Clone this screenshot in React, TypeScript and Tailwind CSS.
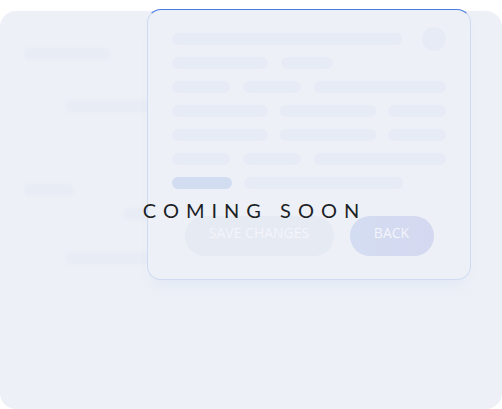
import React from "react";

const Bar = ({ w, blue = false }: { w: string; blue?: boolean }) => (
  <div className={`h-[12px] rounded-full ${w} ${blue ? "bg-[#d3ddf2]" : "bg-[#e7ebf5]"}`} />
);

export default function App() {
  return (
    <div className="relative w-[502px] h-[409px] bg-white overflow-hidden" style={{ fontFamily: "'Open Sans', sans-serif" }}>
      {/* Outer card */}
      <div className="mt-[11px] h-[398px] w-[502px] rounded-[16px] bg-[#edf0f6] relative">
        <div className="flex flex-col pt-[37px] blur-[0.8px]">
          <div className="ml-[24px] h-[12px] w-[87px] rounded-full bg-[#e8ecf5]" />
          <div className="ml-[65px] mt-[40px] h-[12px] w-[160px] rounded-full bg-[#e8ecf5]" />
          <div className="ml-[24px] mt-[72px] h-[12px] w-[50px] rounded-full bg-[#e8ecf5]" />
          <div className="ml-[123px] mt-[12px] h-[12px] w-[120px] rounded-full bg-[#e8ecf5]" />
          <div className="ml-[65px] mt-[32px] h-[12px] w-[160px] rounded-full bg-[#e8ecf5]" />
        </div>
      </div>

      {/* Modal */}
      <div className="absolute left-[147px] top-[9px] w-[324px] h-[271px] rounded-[14px] border border-[#cfdbf3] border-t-[#4a7be4] bg-[#edf0f6] shadow-[0_12px_10px_-6px_rgba(220,229,247,0.5)] flex flex-col pt-[23px] px-[24px]">
        <div className="flex flex-col gap-[12px] blur-[0.6px]">
          <div className="flex items-center justify-between h-[12px]">
            <Bar w="w-[230px]" />
            <div className="h-[24px] w-[24px] rounded-full bg-[#e7ebf5]" />
          </div>
          <div className="flex gap-[13px]">
            <Bar w="w-[96px]" />
            <Bar w="w-[52px]" />
          </div>
          <div className="flex gap-[13px]">
            <Bar w="w-[58px]" />
            <Bar w="w-[58px]" />
            <Bar w="w-[132px]" />
          </div>
          <div className="flex gap-[12px]">
            <Bar w="w-[96px]" />
            <Bar w="w-[97px]" />
            <Bar w="w-[58px]" />
          </div>
          <div className="flex gap-[12px]">
            <Bar w="w-[96px]" />
            <Bar w="w-[97px]" />
            <Bar w="w-[58px]" />
          </div>
          <div className="flex gap-[13px]">
            <Bar w="w-[58px]" />
            <Bar w="w-[58px]" />
            <Bar w="w-[132px]" />
          </div>
          <div className="flex gap-[12px]">
            <Bar w="w-[60px]" blue />
            <Bar w="w-[159px]" />
          </div>
        </div>
        <div className="mt-[27px] flex justify-center gap-[16px]">
          <div className="h-[40px] w-[149px] rounded-full bg-[#e6eaf3] flex items-center justify-center pb-[8px] text-[14px] text-[#f3f5fa]">
            SAVE CHANGES
          </div>
          <div className="h-[40px] w-[84px] rounded-full bg-gradient-to-r from-[#d3ddf2] to-[#d5d8f0] flex items-center justify-center pb-[8px] text-[14px] text-[#f3f5fa]">
            BACK
          </div>
        </div>
      </div>

      {/* Coming soon overlay */}
      <div className="absolute left-0 right-0 top-[11px] h-[398px] flex items-center justify-center pointer-events-none">
        <div className="text-[20px] leading-none font-normal tracking-[7px] text-[#1c1f26] pl-[7px]" style={{ fontFamily: "Lato, sans-serif" }}>
          COMING SOON
        </div>
      </div>
    </div>
  );
}
